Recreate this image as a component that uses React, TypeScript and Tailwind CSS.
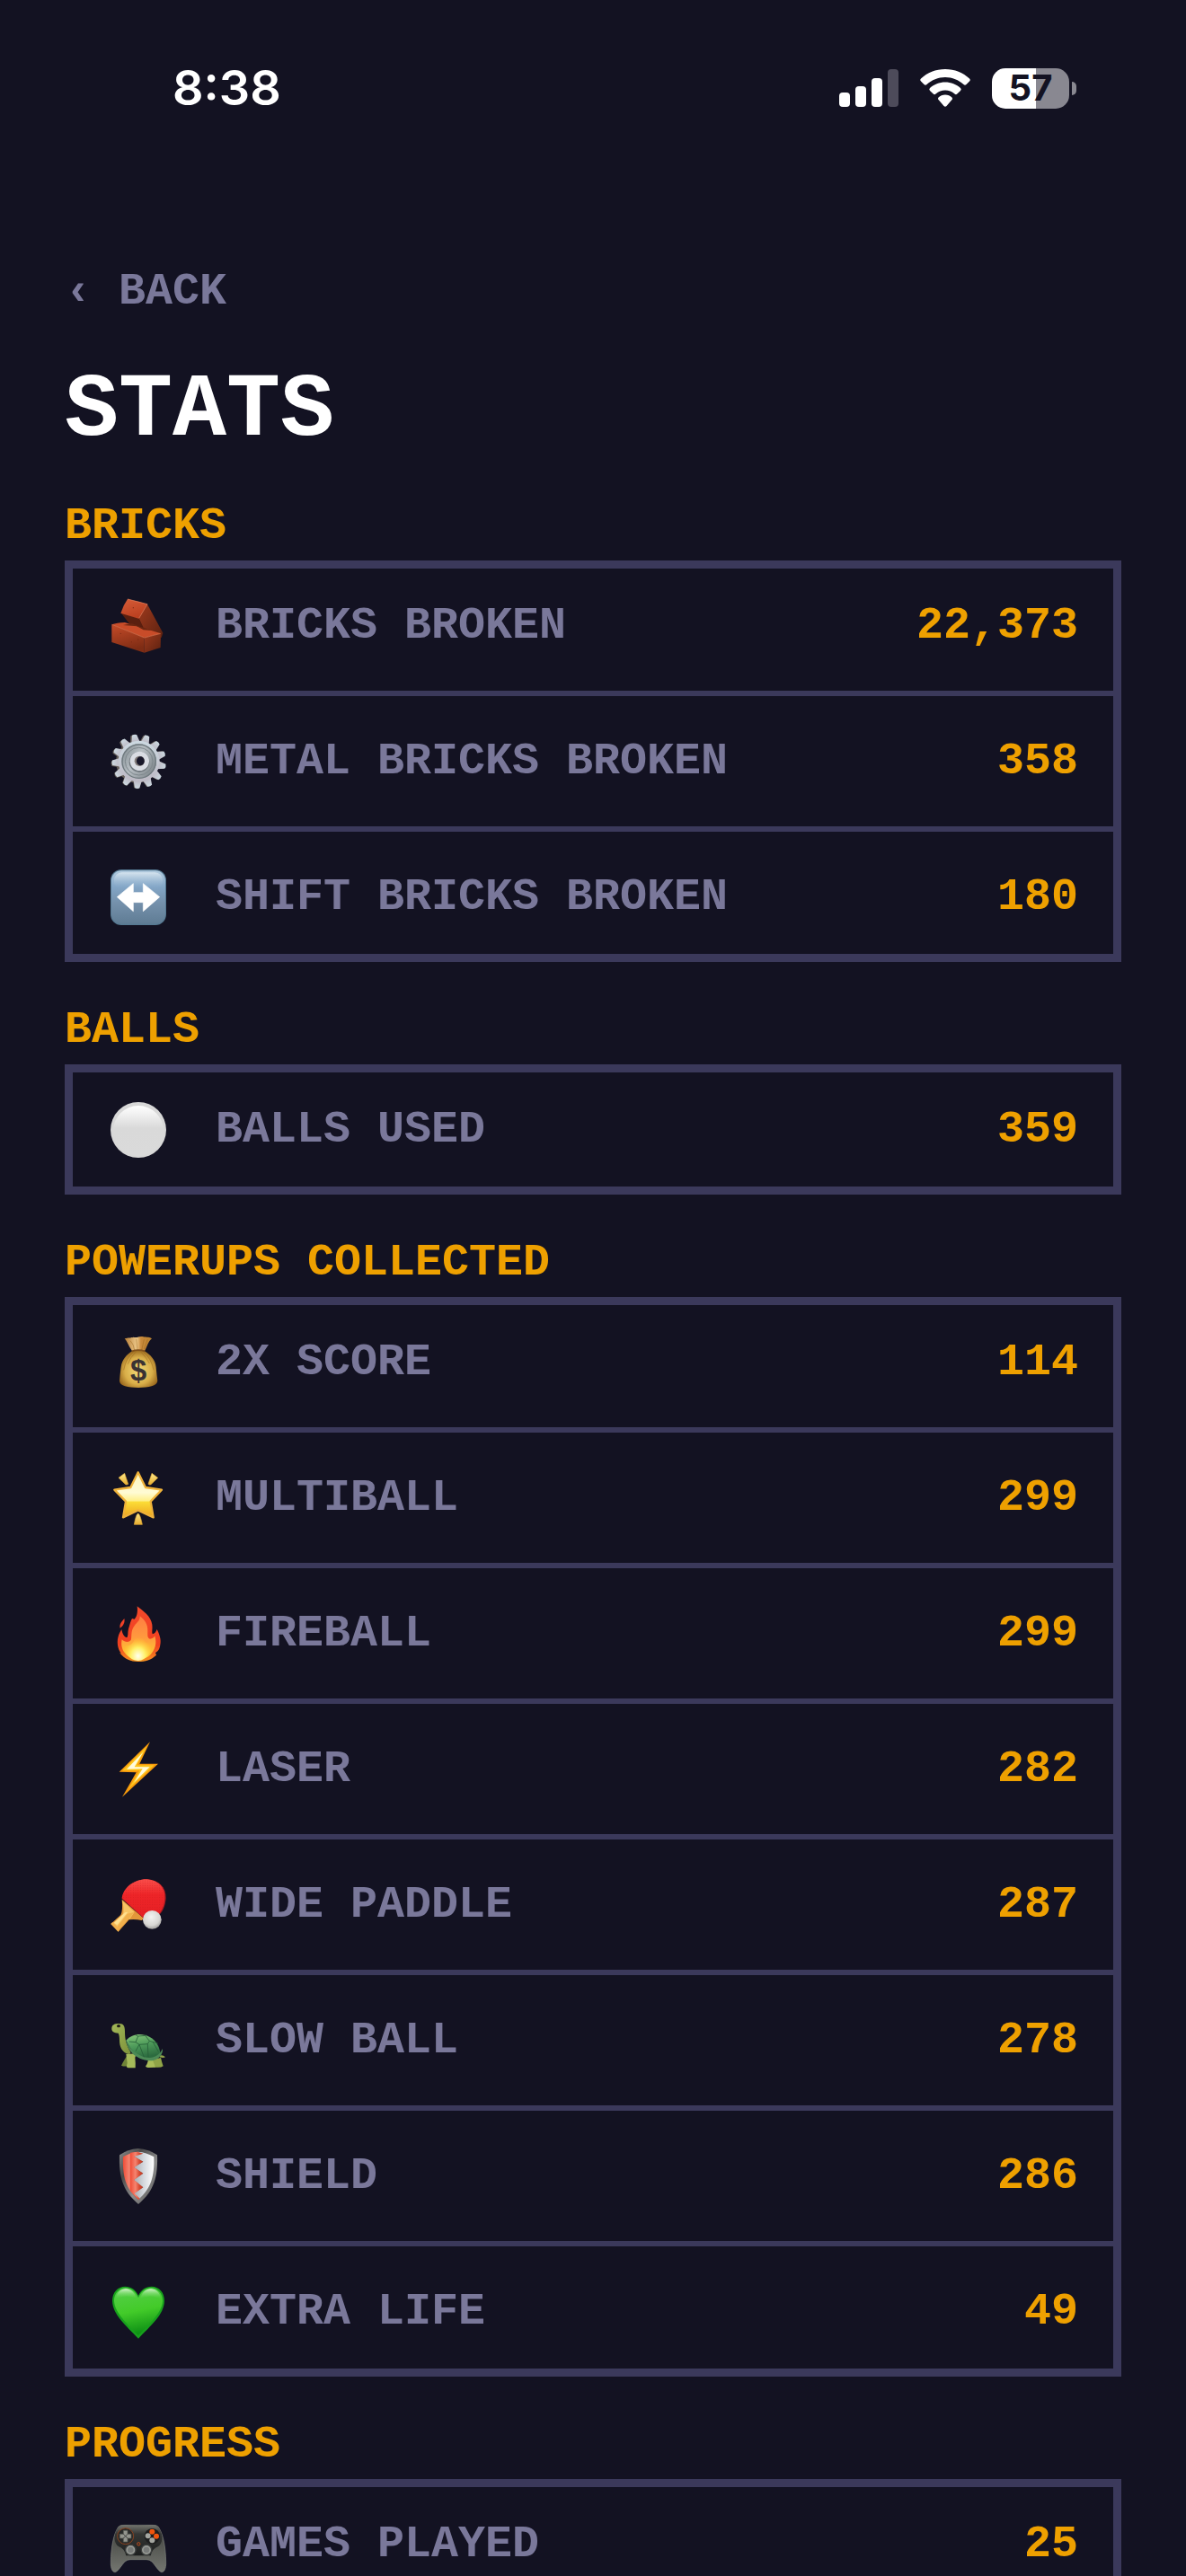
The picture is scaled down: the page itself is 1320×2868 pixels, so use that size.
import type { ReactNode } from "react";

function Icon({ children }: { children: ReactNode }) {
  return (
    <svg viewBox="0 0 186 186" className="size-[62px] overflow-visible" aria-hidden="true">
      {children}
    </svg>
  );
}

function BrickIcon() {
  return (
    <Icon>
      <defs>
        <linearGradient id="brickTop" x1="0" y1="0" x2="0.4" y2="1">
          <stop offset="0" stopColor="#d65c38" />
          <stop offset="1" stopColor="#bb4020" />
        </linearGradient>
        <linearGradient id="brickFront" x1="0" y1="0" x2="0.3" y2="1">
          <stop offset="0" stopColor="#c54b28" />
          <stop offset="1" stopColor="#7e2c14" />
        </linearGradient>
        <linearGradient id="brickSide" x1="0" y1="0" x2="1" y2="1">
          <stop offset="0" stopColor="#9e3a1d" />
          <stop offset="1" stopColor="#5c2110" />
        </linearGradient>
      </defs>
      <path d="M123 20 L175 116 L170 132 L108 98 L94 66Z" fill="url(#brickSide)" />
      <path d="M34 48 L94 66 L110 98 L62 84Z" fill="#5a1f0f" />
      <path d="M4 88 Q20 82 48 81 L168 118 L113 132Z" fill="#c84c29" />
      <path d="M42 90 L70 84 L138 108 L110 106 L88 94 Z" fill="#6a2611" />
      <path d="M57 3 Q90 10 123 20 L94 68 L34 50 Q42 24 57 3Z" fill="url(#brickTop)" />
      <path d="M4 88 L113 132 L113 182 Q56 164 4 147Z" fill="url(#brickFront)" />
      <path d="M113 132 L168 118 L167 165 L113 182Z" fill="url(#brickSide)" />
      <path d="M5 88 L113 132 L167 118" fill="none" stroke="#e27a52" strokeWidth="2" />
      <path d="M57 3 L123 20 L95 67" fill="none" stroke="#e88461" strokeWidth="2" />
      <g fill="#7a2b14">
        <circle cx="34" cy="118" r="2" />
        <circle cx="70" cy="146" r="2" />
        <circle cx="92" cy="138" r="2" />
        <circle cx="76" cy="32" r="2" />
      </g>
    </Icon>
  );
}

const TEETH = Array.from({ length: 13 }, (_, i) => (i * 360) / 13 - 8);

function GearIcon() {
  return (
    <Icon>
      <defs>
        <linearGradient id="gearBody" x1="0" y1="0" x2="0" y2="1">
          <stop offset="0" stopColor="#ccd9e1" />
          <stop offset="1" stopColor="#bdb9c4" />
        </linearGradient>
        <linearGradient id="gearDish" x1="0" y1="0" x2="1" y2="0.6">
          <stop offset="0" stopColor="#7b868b" />
          <stop offset="0.5" stopColor="#b7bec3" />
          <stop offset="1" stopColor="#848c91" />
        </linearGradient>
      </defs>
      <g fill="#655f5a">
        {TEETH.map((a) => (
          <path key={a} d="M78 26 L82 3 Q91 -2 100 3 L105 26Z" transform={`rotate(${a} 92 93) translate(-3 2)`} />
        ))}
        <circle cx="88" cy="94" r="70" />
      </g>
      <g fill="url(#gearBody)">
        {TEETH.map((a) => (
          <path key={a} d="M79 28 L84 3 Q92 -1 100 3 L107 28Z" transform={`rotate(${a} 95 92)`} />
        ))}
        <circle cx="95" cy="92" r="69" />
      </g>
      <circle cx="95" cy="92" r="58" fill="url(#gearDish)" />
      <circle cx="95" cy="92" r="56" fill="none" stroke="#6f7a7f" strokeWidth="4" />
      <circle cx="95" cy="92" r="46" fill="none" stroke="#7e888d" strokeWidth="3" />
      <circle cx="96" cy="94" r="34" fill="#6d757b" />
      <circle cx="97" cy="91" r="32" fill="#d9dce3" />
      <circle cx="97" cy="91" r="17" fill="#817a78" />
      <ellipse cx="100" cy="91" rx="13" ry="15" fill="#18172a" />
    </Icon>
  );
}

function ArrowsIcon() {
  return (
    <Icon>
      <defs>
        <linearGradient id="arrowTile" x1="0" y1="0" x2="0" y2="1">
          <stop offset="0" stopColor="#b2cbdf" />
          <stop offset="0.3" stopColor="#83a6c7" />
          <stop offset="0.6" stopColor="#7591ac" />
          <stop offset="1" stopColor="#5f7c94" />
        </linearGradient>
        <linearGradient id="arrowGloss" x1="0" y1="0" x2="0" y2="1">
          <stop offset="0" stopColor="#d5e3ee" />
          <stop offset="1" stopColor="#83a6c7" stopOpacity="0" />
        </linearGradient>
      </defs>
      <rect width="186" height="186" rx="36" fill="#557992" />
      <rect x="3" y="4" width="180" height="178" rx="33" fill="url(#arrowTile)" />
      <rect x="12" y="10" width="162" height="56" rx="26" fill="url(#arrowGloss)" />
      <path
        d="M22 92 L76 47 V77 H109 V47 L164 92 L109 140 V110 H76 V140Z"
        fill="#fff"
        stroke="#fff"
        strokeWidth="2"
        strokeLinejoin="round"
      />
    </Icon>
  );
}

function BallIcon() {
  return (
    <Icon>
      <defs>
        <linearGradient id="ballGloss" x1="0" y1="0" x2="0" y2="1">
          <stop offset="0" stopColor="#ffffff" />
          <stop offset="0.45" stopColor="#d9d9d9" />
          <stop offset="1" stopColor="#dadada" />
        </linearGradient>
      </defs>
      <circle cx="93" cy="93" r="93" fill="#d8d8d8" />
      <circle cx="93" cy="96" r="84" fill="url(#ballGloss)" />
    </Icon>
  );
}

function MoneyIcon() {
  return (
    <Icon>
      <defs>
        <radialGradient id="bag" cx="0.5" cy="0.55" r="0.6">
          <stop offset="0" stopColor="#f2d977" />
          <stop offset="0.6" stopColor="#d9ae48" />
          <stop offset="1" stopColor="#8f5c17" />
        </radialGradient>
        <linearGradient id="bagNeck" x1="0" y1="0" x2="1" y2="0">
          <stop offset="0" stopColor="#b57c35" />
          <stop offset="0.45" stopColor="#edc88a" />
          <stop offset="0.6" stopColor="#c98a3c" />
          <stop offset="1" stopColor="#b9812f" />
        </linearGradient>
      </defs>
      <path
        d="M72 54 C58 34 56 22 47 13 C60 8 66 12 76 8 C90 12 92 5 106 6 C115 9 128 6 138 13 C124 25 124 38 114 54Z"
        fill="url(#bagNeck)"
      />
      <path
        d="M72 55 Q93 50 114 55 C132 66 150 84 152 108 Q154 132 157 154 C156 172 128 177 93 177 C58 177 30 172 30 154 Q32 130 35 108 C38 84 54 66 72 55Z"
        fill="url(#bag)"
      />
      <g fill="none" stroke="#996419" strokeWidth="2" opacity="0.7">
        <path d="M76 58 Q52 76 44 118 M84 58 Q66 76 58 98 M110 58 Q136 78 144 118 M102 58 Q118 74 130 96" />
        <path d="M66 20 Q78 32 80 52 M86 14 L90 52 M112 16 L104 52 M124 16 L112 48" />
      </g>
      <path d="M71 55 Q93 48 115 55" fill="none" stroke="#80501a" strokeWidth="5" />
      <text
        x="93"
        y="154"
        textAnchor="middle"
        fontFamily="Liberation Sans, sans-serif"
        fontWeight="700"
        fontSize="98"
        fill="#3a3233"
      >
        $
      </text>
    </Icon>
  );
}

function StarIcon() {
  return (
    <Icon>
      <defs>
        <linearGradient id="star" x1="0" y1="0" x2="0" y2="1">
          <stop offset="0" stopColor="#fff7bd" />
          <stop offset="0.45" stopColor="#fffbd4" />
          <stop offset="0.63" stopColor="#fff08a" />
          <stop offset="0.66" stopColor="#fbdc36" />
          <stop offset="1" stopColor="#eda31f" />
        </linearGradient>
        <linearGradient id="ray" x1="0" y1="0" x2="0" y2="1">
          <stop offset="0" stopColor="#fde98a" />
          <stop offset="1" stopColor="#e7ac2e" />
        </linearGradient>
      </defs>
      <g fill="url(#ray)" stroke="#dfa93a" strokeWidth="2" strokeLinejoin="round">
        <path d="M27 25 L47 10 L59 46 Q54 50 50 47Z" />
        <path d="M158 25 L138 10 L126 46 Q131 50 135 47Z" />
        <path d="M92 144 Q99 146 106 181 H79 Q85 146 92 144Z" />
      </g>
      <path
        d="M92 7 L117 57 L171 65 L134 104 L143 157 L92 133 L42 157 L51 104 L13 65 L67 57Z"
        fill="url(#star)"
        stroke="#efb23a"
        strokeWidth="7"
        strokeLinejoin="round"
      />
    </Icon>
  );
}

function FireIcon() {
  return (
    <Icon>
      <defs>
        <linearGradient id="flame" x1="0" y1="0" x2="0" y2="1">
          <stop offset="0" stopColor="#f4492b" />
          <stop offset="0.7" stopColor="#f0401f" />
          <stop offset="1" stopColor="#f79321" />
        </linearGradient>
        <linearGradient id="flameMid" x1="0" y1="0" x2="0" y2="1">
          <stop offset="0" stopColor="#ff7d42" />
          <stop offset="0.5" stopColor="#ff9a3e" />
          <stop offset="1" stopColor="#ffd42e" />
        </linearGradient>
        <radialGradient id="flameCore" cx="0.5" cy="0.85" r="0.6">
          <stop offset="0" stopColor="#fffff0" />
          <stop offset="0.45" stopColor="#fff067" />
          <stop offset="1" stopColor="#ffc328" stopOpacity="0" />
        </radialGradient>
      </defs>
      <path
        d="M89 1 C108 16 135 34 139 62 C141 76 137 86 140 94 Q150 92 155 78 C163 94 170 112 166 130 C164 145 158 153 150 156 L153 164 C136 180 116 186 92 186 C68 186 48 178 30 156 L36 158 C24 146 21 122 25 106 C27 92 34 84 37 78 C40 98 50 108 56 104 C60 96 56 88 62 70 C66 56 68 48 72 42 L80 44 C90 34 91 16 89 1Z"
        fill="url(#flame)"
      />
      <path d="M46 42 C49 54 43 66 32 74 C29 62 36 54 46 42Z" fill="#ef4126" />
      <path
        d="M98 34 C116 48 124 62 124 82 C124 96 122 108 132 110 Q142 110 148 100 C156 126 148 148 132 164 C114 182 70 182 52 162 C38 148 34 130 38 112 C48 122 62 122 68 114 C72 104 66 84 80 66 C88 54 98 52 98 34Z"
        fill="url(#flameMid)"
      />
      <path
        d="M94 78 C104 94 106 108 116 120 C124 126 132 126 138 122 C138 156 122 180 92 183 C62 181 46 158 46 132 C58 134 72 130 78 116 C84 102 94 96 94 78Z"
        fill="url(#flameCore)"
      />
    </Icon>
  );
}

function BoltIcon() {
  return (
    <Icon>
      <path d="M132 1 L97 74 L159 74 L39 185 L86 103 L29 101Z" fill="#f79a0c" />
      <path d="M122 16 L88 79 L146 79 L60 158 L97 97 L40 97Z" fill="#fdc51c" />
      <path d="M109 35 L80 85 L131 85 L78 137 L107 91 L54 92Z" fill="#fffbdc" />
    </Icon>
  );
}

function PaddleIcon() {
  return (
    <Icon>
      <defs>
        <linearGradient id="paddleRed" x1="0" y1="0" x2="0" y2="1">
          <stop offset="0" stopColor="#fb4f4b" />
          <stop offset="0.4" stopColor="#ee2528" />
          <stop offset="1" stopColor="#e51f24" />
        </linearGradient>
        <radialGradient id="pingBall" cx="0.45" cy="0.35" r="0.65">
          <stop offset="0" stopColor="#f3f3f1" />
          <stop offset="0.7" stopColor="#d8d7d4" />
          <stop offset="1" stopColor="#a5a3a1" />
        </radialGradient>
        <pattern id="pips" width="8" height="8" patternUnits="userSpaceOnUse">
          <circle cx="4" cy="4" r="1.5" fill="#c9151d" opacity="0.6" />
        </pattern>
      </defs>
      <path d="M38 74 L112 138 L104 144 Q84 140 62 142 L26 182 L1 156 L34 126 Q42 110 38 74Z" fill="#e3973a" />
      <path d="M39 78 L80 116 L64 140 L56 138 L26 172 L8 154 L42 124 Q46 104 39 78Z" fill="#f8c565" />
      <path d="M56 122 L80 116 L60 140 L30 174 L26 182 L1 156 L7 150 L22 166Z" fill="#f1b04c" />
      <path d="M12 152 L48 118 L58 116 L22 160Z" fill="#ffe08f" />
      <path
        d="M38 72 C42 36 78 6 124 7 C162 10 186 34 185 70 C183 94 176 112 164 124 L112 138Z"
        fill="#a51a20"
      />
      <path
        d="M38 70 C42 36 78 6 122 7 C160 10 182 34 181 68 C180 92 172 112 158 126 L110 136Z"
        fill="url(#paddleRed)"
      />
      <path
        d="M38 70 C42 36 78 6 122 7 C160 10 182 34 181 68 C180 92 172 112 158 126 L110 136Z"
        fill="url(#pips)"
      />
      <circle cx="139" cy="142" r="31" fill="url(#pingBall)" />
    </Icon>
  );
}

function TurtleIcon() {
  return (
    <Icon>
      <defs>
        <linearGradient id="shell" x1="0" y1="0" x2="0.3" y2="1">
          <stop offset="0" stopColor="#8cca7c" />
          <stop offset="0.5" stopColor="#4f9c5b" />
          <stop offset="1" stopColor="#2c6b3f" />
        </linearGradient>
        <linearGradient id="turtleSkin" x1="0" y1="0" x2="1" y2="1">
          <stop offset="0" stopColor="#a3b858" />
          <stop offset="1" stopColor="#7d913a" />
        </linearGradient>
      </defs>
      <path d="M166 142 Q176 140 183 148 Q176 152 164 148Z" fill="#93a54a" />
      <path d="M60 136 Q44 160 36 176 Q44 180 58 178 L76 150Z" fill="#6f8337" />
      <path d="M52 138 L56 168 Q50 184 60 184 H83 Q84 168 82 150 L86 136Z" fill="#a5ba59" />
      <path d="M126 154 Q124 172 117 178 Q118 184 128 183 L150 182 V152Z" fill="#a9bc59" />
      <path d="M140 156 L150 182 Q168 184 176 178 Q172 168 168 150Z" fill="#8fa347" />
      <path
        d="M4 52 C4 38 18 35 30 36 C44 36 48 46 48 62 C48 88 52 104 66 130 Q70 138 60 138 C38 132 30 112 30 92 Q30 74 26 68 C12 68 3 62 4 52Z"
        fill="url(#turtleSkin)"
      />
      <ellipse cx="27" cy="44" rx="6" ry="5" fill="#1d1b16" />
      <path
        d="M52 92 C70 70 104 66 130 80 C152 92 162 110 166 132 Q158 154 134 154 C98 152 70 132 52 92Z"
        fill="url(#shell)"
      />
      <path
        d="M50 88 C62 122 96 150 132 150 Q160 148 174 120 C176 140 158 160 132 160 C88 156 58 134 50 88Z"
        fill="#4c8a56"
      />
      <g fill="none" stroke="#275f38" strokeWidth="2.5">
        <path d="M84 98 L92 78 L116 76 L130 94 L124 104 L96 106Z" />
        <path d="M84 98 L62 96 M96 106 L84 128 M124 104 L126 148 M130 94 L158 102 M92 78 L84 74 M116 76 L120 74 M96 106 L112 148 M142 98 L160 130" />
      </g>
    </Icon>
  );
}

function ShieldIcon() {
  return (
    <Icon>
      <defs>
        <linearGradient id="shieldRim" x1="0" y1="0" x2="1" y2="1">
          <stop offset="0" stopColor="#8e8e8e" />
          <stop offset="0.3" stopColor="#4b4b4b" />
          <stop offset="0.6" stopColor="#8c8c8c" />
          <stop offset="1" stopColor="#555555" />
        </linearGradient>
        <linearGradient id="shieldRed" x1="0" y1="0" x2="1" y2="0">
          <stop offset="0" stopColor="#f04c36" />
          <stop offset="0.4" stopColor="#f58470" />
          <stop offset="0.7" stopColor="#d84a32" />
          <stop offset="1" stopColor="#b93a25" />
        </linearGradient>
        <linearGradient id="shieldWhite" x1="0" y1="0" x2="1" y2="0">
          <stop offset="0" stopColor="#a9adb2" />
          <stop offset="0.5" stopColor="#d5d9df" />
          <stop offset="1" stopColor="#ffffff" />
        </linearGradient>
      </defs>
      <path d="M30 22 Q58 2 92 0 Q128 2 156 22 C158 92 148 140 93 186 C38 140 28 92 30 22Z" fill="url(#shieldRim)" />
      <path d="M42 28 Q66 13 92 11 V170 C48 132 40 90 42 28Z" fill="url(#shieldRed)" />
      <path
        d="M92 11 Q120 13 145 28 C147 92 136 134 94 170 L78 150 L109 130 L78 105 L109 83 L78 63 L109 44 L78 26Z"
        fill="url(#shieldWhite)"
      />
      <path d="M90 11 L109 17 L78 27 L109 44 L78 63 L109 83 L78 105 L109 130 L80 150 L98 167 L94 172 L66 142 V14Z" fill="url(#shieldRed)" />
    </Icon>
  );
}

function HeartIcon() {
  return (
    <Icon>
      <defs>
        <linearGradient id="heart" x1="0" y1="0" x2="0.2" y2="1">
          <stop offset="0" stopColor="#55cf4c" />
          <stop offset="0.55" stopColor="#43cb29" />
          <stop offset="1" stopColor="#0f9215" />
        </linearGradient>
        <linearGradient id="heartGloss" x1="0" y1="0" x2="0" y2="1">
          <stop offset="0" stopColor="#d4f3cc" />
          <stop offset="1" stopColor="#5dd24a" stopOpacity="0" />
        </linearGradient>
      </defs>
      <path
        d="M93 38 C84 18 68 8 49 8 C24 8 6 28 6 56 C7 102 52 138 93 182 C134 138 179 102 180 56 C180 28 162 8 137 8 C118 8 102 18 93 38Z"
        fill="#17a01c"
      />
      <path
        d="M93 46 C84 24 68 13 50 13 C28 13 12 32 12 56 C14 96 56 132 93 172 C130 132 172 96 174 56 C174 32 158 13 136 13 C118 13 102 24 93 46Z"
        fill="url(#heart)"
      />
      <path d="M18 50 C20 24 40 14 54 16 C72 18 82 32 86 48 C66 38 38 38 18 50Z" fill="url(#heartGloss)" />
      <path d="M168 50 C166 24 146 14 132 16 C114 18 104 32 100 48 C120 38 148 38 168 50Z" fill="url(#heartGloss)" />
    </Icon>
  );
}

function GamepadIcon() {
  return (
    <Icon>
      <defs>
        <linearGradient id="padGrip" x1="0" y1="0" x2="0" y2="1">
          <stop offset="0" stopColor="#3b3d3a" />
          <stop offset="0.5" stopColor="#585a55" />
          <stop offset="1" stopColor="#747670" />
        </linearGradient>
        <linearGradient id="padBody" x1="0" y1="0" x2="0" y2="1">
          <stop offset="0" stopColor="#73756f" />
          <stop offset="0.3" stopColor="#343634" />
          <stop offset="1" stopColor="#1d1f1f" />
        </linearGradient>
      </defs>
      <path
        d="M26 34 Q32 26 48 28 H138 Q154 26 160 34 C178 62 184 108 185 150 C186 176 178 186 170 185 C160 182 148 160 138 150 Q130 143 120 143 H66 Q56 143 48 150 C38 160 26 182 16 185 C8 186 0 176 1 150 C2 108 8 62 26 34Z"
        fill="url(#padGrip)"
        stroke="#82857e"
        strokeWidth="2"
      />
      <path
        d="M24 38 Q28 28 52 27 Q93 32 134 27 Q158 28 162 38 C178 64 174 90 158 100 Q140 106 134 130 H52 Q46 106 28 100 C12 90 8 64 24 38Z"
        fill="url(#padBody)"
      />
      <circle cx="50" cy="65" r="27" fill="#292b2a" stroke="#8a4321" strokeWidth="3" />
      <path
        d="M43 46 H57 V58 H69 V72 H57 V84 H43 V72 H31 V58 H43Z"
        fill="#92948d"
        stroke="#555750"
        strokeWidth="2"
      />
      <path d="M43 58 L57 72 M57 58 L43 72" stroke="#40423f" strokeWidth="3" />
      <circle cx="139" cy="65" r="26" fill="#1c1d1e" />
      <circle cx="139" cy="50" r="9" fill="#f0540d" />
      <circle cx="153" cy="65" r="9" fill="#f0540d" />
      <circle cx="125" cy="64" r="9" fill="#a4a6a0" />
      <circle cx="139" cy="79" r="9" fill="#a4a6a0" />
      <circle cx="94" cy="91" r="5" fill="none" stroke="#c14e1c" strokeWidth="3" />
      <g fill="#989b96" stroke="#3c3f3e" strokeWidth="4">
        <circle cx="67" cy="111" r="17" />
        <circle cx="120" cy="111" r="17" />
      </g>
      <g fill="#777a78">
        <circle cx="67" cy="111" r="10" />
        <circle cx="120" cy="111" r="10" />
      </g>
    </Icon>
  );
}

type Stat = { label: string; value: string; icon: ReactNode };

const SECTIONS: { title: string; stats: Stat[] }[] = [
  {
    title: "BRICKS",
    stats: [
      { label: "BRICKS BROKEN", value: "22,373", icon: <BrickIcon /> },
      { label: "METAL BRICKS BROKEN", value: "358", icon: <GearIcon /> },
      { label: "SHIFT BRICKS BROKEN", value: "180", icon: <ArrowsIcon /> },
    ],
  },
  {
    title: "BALLS",
    stats: [{ label: "BALLS USED", value: "359", icon: <BallIcon /> }],
  },
  {
    title: "POWERUPS COLLECTED",
    stats: [
      { label: "2X SCORE", value: "114", icon: <MoneyIcon /> },
      { label: "MULTIBALL", value: "299", icon: <StarIcon /> },
      { label: "FIREBALL", value: "299", icon: <FireIcon /> },
      { label: "LASER", value: "282", icon: <BoltIcon /> },
      { label: "WIDE PADDLE", value: "287", icon: <PaddleIcon /> },
      { label: "SLOW BALL", value: "278", icon: <TurtleIcon /> },
      { label: "SHIELD", value: "286", icon: <ShieldIcon /> },
      { label: "EXTRA LIFE", value: "49", icon: <HeartIcon /> },
    ],
  },
  {
    title: "PROGRESS",
    stats: [{ label: "GAMES PLAYED", value: "25", icon: <GamepadIcon /> }],
  },
];

function StatusBar() {
  return (
    <div className="flex h-[196px] items-center justify-between pr-[122px] pl-[192px] font-[Inter,sans-serif] text-white">
      <span className="text-[54px] leading-none font-semibold">8:38</span>
      <div className="flex items-center gap-6">
        <svg viewBox="0 0 66 42" className="h-[42px] w-[66px]" aria-label="Signal">
          <rect x="0" y="26" width="12" height="16" rx="4" fill="#fff" />
          <rect x="18" y="19" width="12" height="23" rx="4" fill="#fff" />
          <rect x="36" y="10" width="12" height="32" rx="4" fill="#fff" />
          <rect x="54" y="0" width="12" height="42" rx="4" fill="#4d4b5a" />
        </svg>
        <svg viewBox="0 0 56 42" className="h-[42px] w-14" aria-label="Wi-Fi">
          <g fill="#fff">
            <path d="M28 0 C38.500 0 48 4 55 10.500 Q56.500 12 55 13.500 L51.500 17 Q50 18.300 48.500 17 C43 12 36 9 28 9 C20 9 13 12 7.500 17 Q6 18.300 4.500 17 L1 13.500 Q-.5 12 1 10.500 C8 4 17.500 0 28 0Z" />
            <path d="M28 14.500 C34.500 14.500 40.500 17 45 21 Q46.500 22.500 45 24 L41.300 27.500 Q40 28.800 38.500 27.500 C35.500 25 32 23.500 28 23.500 C24 23.500 20.500 25 17.500 27.500 Q16 28.800 14.700 27.500 L11 24 Q9.500 22.500 11 21 C15.500 17 21.500 14.500 28 14.500Z" />
            <path d="M28 28.500 C31 28.500 33.500 29.500 35.500 31.500 Q36.500 33 35.500 34 L29.500 41 Q28 42.500 26.500 41 L20.500 34 Q19.500 33 20.500 31.500 C22.500 29.500 25 28.500 28 28.500Z" />
          </g>
        </svg>
        <div className="flex items-center gap-[3px]">
          <div className="flex h-[45px] w-[86px] items-center justify-center rounded-[15px] bg-linear-to-r from-white from-57% to-[#898891] to-57% text-[40px] leading-none font-bold text-[#131222]">
            57
          </div>
          <div className="h-[15px] w-[5px] rounded-r-full bg-[#898891]" />
        </div>
      </div>
    </div>
  );
}

function Section({ title, stats }: { title: string; stats: Stat[] }) {
  return (
    <section className="mt-[52px] first:mt-0">
      <h2 className="mb-3.5 leading-[48px] text-[#eea000]">{title}</h2>
      <dl className="divide-y-[6px] divide-[#3b395b] outline-[9px] -outline-offset-[9px] outline-[#3b395b] outline-solid">
        {stats.map((s) => (
          <div key={s.label} className="flex items-center px-12">
            <dt className="flex h-[145px] flex-1 items-center gap-[52px] text-[#7a789a]">
              <span className="flex w-[68px] justify-center">{s.icon}</span>
              {s.label}
            </dt>
            <dd className="text-[#eea000]">{s.value}</dd>
          </div>
        ))}
      </dl>
    </section>
  );
}

export default function App() {
  return (
    <div className="h-screen overflow-y-auto bg-[#131222] font-['Liberation_Mono',monospace] text-[50px] leading-[60px] font-bold [scrollbar-width:none]">
      <StatusBar />
      <main className="px-[72px] pt-[105px] pb-16">
        <button type="button" className="block leading-[48px] text-[#7a789a]">
          ‹ BACK
        </button>
        <h1 className="mt-[61px] mb-14 text-[100px] leading-[96px] text-white">STATS</h1>
        {SECTIONS.map((s) => (
          <Section key={s.title} {...s} />
        ))}
      </main>
    </div>
  );
}
